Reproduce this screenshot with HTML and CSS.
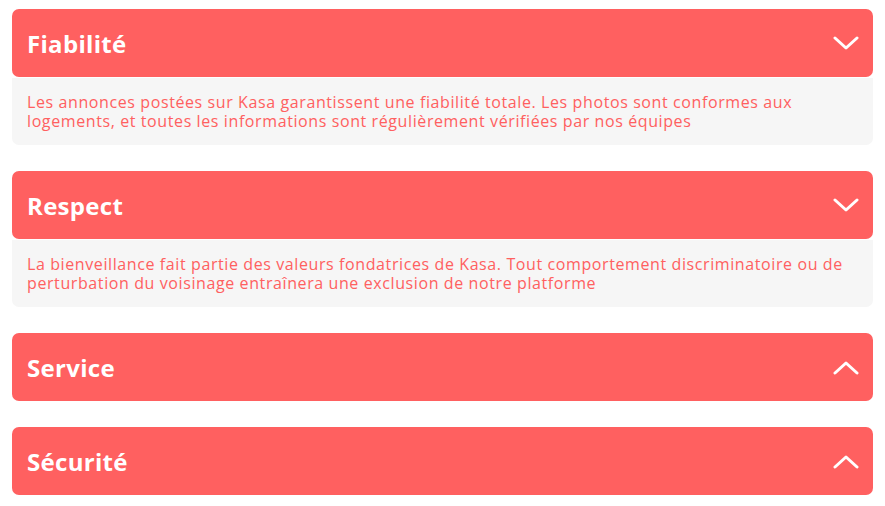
FILE: index.html
```html
<!DOCTYPE html>
<html lang="fr">
<head>
<meta charset="utf-8">
<title>Kasa - À propos</title>
<link rel="stylesheet" href="styles.css">
</head>
<body>
<main class="collapses">
  <section class="collapse">
    <div class="collapse-head">
      <h2 class="collapse-title">Fiabilité</h2>
      <svg class="chevron" viewBox="0 0 26 15" width="26" height="15"><polyline points="2,2 13,12 24,2"/></svg>
    </div>
    <div class="collapse-body">
      <p>Les annonces postées sur Kasa garantissent une fiabilité totale. Les photos sont conformes aux logements, et toutes les informations sont régulièrement vérifiées par nos équipes</p>
    </div>
  </section>
  <section class="collapse">
    <div class="collapse-head">
      <h2 class="collapse-title">Respect</h2>
      <svg class="chevron" viewBox="0 0 26 15" width="26" height="15"><polyline points="2,2 13,12 24,2"/></svg>
    </div>
    <div class="collapse-body">
      <p>La bienveillance fait partie des valeurs fondatrices de Kasa. Tout comportement discriminatoire ou de perturbation du voisinage entraînera une exclusion de notre platforme</p>
    </div>
  </section>
  <section class="collapse">
    <div class="collapse-head">
      <h2 class="collapse-title">Service</h2>
      <svg class="chevron" viewBox="0 0 26 15" width="26" height="15"><polyline points="2,13 13,3 24,13"/></svg>
    </div>
  </section>
  <section class="collapse">
    <div class="collapse-head">
      <h2 class="collapse-title">Sécurité</h2>
      <svg class="chevron" viewBox="0 0 26 15" width="26" height="15"><polyline points="2,13 13,3 24,13"/></svg>
    </div>
  </section>
</main>
</body>
</html>
```
FILE: styles.css
```css
* { box-sizing: border-box; }
html, body { margin: 0; padding: 0; background: #ffffff; }
body { font-family: "Open Sans", "Noto Sans", sans-serif; }

.collapses {
  display: flex;
  flex-direction: column;
  gap: 26px;
  padding: 9px 12px 0 12px;
}

.collapse { display: flex; flex-direction: column; }

.collapse-head {
  height: 68px;
  background: #FF6060;
  border-radius: 7px;
  display: flex;
  align-items: center;
  justify-content: space-between;
  padding: 0 14px 0 15px;
  position: relative;
  z-index: 1;
}

.collapse-title {
  margin: 0;
  color: #ffffff;
  font-size: 24px;
  font-weight: 700;
  letter-spacing: 0.3px;
}

.chevron {
  fill: none;
  stroke: #ffffff;
  stroke-width: 3;
  stroke-linecap: round;
  stroke-linejoin: round;
}

.collapse-body {
  background: #F6F6F6;
  border-radius: 0 0 7px 7px;
  margin-top: 1px;
  padding: 15px 15px 14px 15px;
}

.collapse-body p {
  margin: 0;
  color: #FF6060;
  font-size: 16px;
  line-height: 19px;
  letter-spacing: 0.6px;
}
```
